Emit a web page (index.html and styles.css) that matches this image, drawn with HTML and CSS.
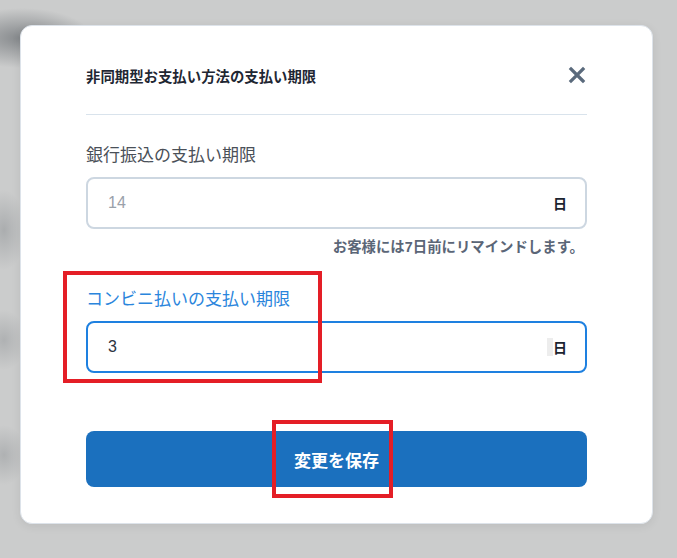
FILE: index.html
```html
<!DOCTYPE html>
<html lang="ja">
<head>
    <meta charset="UTF-8">
    <meta name="viewport" content="width=device-width, initial-scale=1.0">
    <title>支払い期限</title>
    <link rel="stylesheet" href="styles.css">
</head>
<body>
    <div class="backdrop">
        <div class="modal">
            <div class="modal-header">
                <h2 class="modal-title">非同期型お支払い方法の支払い期限</h2>
                <button class="btn-close" aria-label="閉じる">
                    <svg width="18" height="18" viewBox="0 0 18 18">
                        <path d="M3 3 L15 15 M15 3 L3 15" stroke="#5a6a7c" stroke-width="3.2" stroke-linecap="square"/>
                    </svg>
                </button>
            </div>

            <div class="field">
                <label class="field-label">銀行振込の支払い期限</label>
                <div class="input-box">
                    <span class="input-value placeholder">14</span>
                    <span class="input-unit">日</span>
                </div>
                <p class="field-hint">お客様には7日前にリマインドします。</p>
            </div>

            <div class="field field-active">
                <label class="field-label">コンビニ払いの支払い期限</label>
                <div class="input-box">
                    <span class="input-value">3</span>
                    <span class="caret-box"></span>
                    <span class="input-unit">日</span>
                </div>
            </div>

            <button class="btn-save">変更を保存</button>
        </div>
    </div>

    <!-- annotation frames -->
    <div class="mark mark-field"></div>
    <div class="mark mark-save"></div>
</body>
</html>
```

FILE: styles.css
```css
* {
    margin: 0;
    padding: 0;
    box-sizing: border-box;
}

body {
    font-family: 'Liberation Sans', 'Noto Sans CJK JP', sans-serif;
    background:
        radial-gradient(ellipse 70px 30px at 22px 38px, rgba(85, 90, 95, 0.6), transparent),
        radial-gradient(ellipse 22px 40px at 4px 230px, rgba(110, 115, 120, 0.35), transparent),
        radial-gradient(ellipse 22px 30px at 4px 340px, rgba(110, 115, 120, 0.3), transparent),
        radial-gradient(ellipse 22px 30px at 4px 455px, rgba(110, 115, 120, 0.3), transparent),
        #cbcccc;
    width: 677px;
    height: 558px;
    overflow: hidden;
    position: relative;
}

.backdrop {
    padding: 25px 24px 0 20px;
}

.modal {
    background: #fff;
    width: 633px;
    height: 499px;
    border-radius: 12px;
    border: 1px solid #dde3ea;
    box-shadow: 0 2px 10px rgba(0, 0, 0, 0.08);
    padding: 0 65px;
}

.modal-header {
    display: flex;
    justify-content: space-between;
    align-items: center;
    height: 89px;
    padding-top: 10px;
    border-bottom: 1px solid #d9e3ec;
}

.modal-title {
    font-size: 14.4px;
    font-weight: 700;
    color: #1f2733;
}

.btn-close {
    background: none;
    border: none;
    width: 18px;
    height: 18px;
    margin-right: 1px;
    cursor: pointer;
}

.field {
    padding-top: 30px;
}

.field-label {
    display: block;
    font-size: 17px;
    color: #4a5058;
    line-height: 22px;
    margin-bottom: 10px;
}

.input-box {
    display: flex;
    align-items: center;
    height: 52px;
    border: 2px solid #cdd7e1;
    border-radius: 8px;
    padding: 0 18px 0 20px;
}

.input-value {
    flex: 1;
    font-size: 16px;
    color: #2b3340;
}

.input-value.placeholder {
    color: #9aa1aa;
}

.input-unit {
    font-size: 14px;
    font-weight: 700;
    color: #1b2430;
}

.caret-box {
    width: 6px;
    height: 18px;
    background: #ededed;
}

.field-hint {
    text-align: right;
    font-size: 14.4px;
    font-weight: 700;
    color: #5b6677;
    line-height: 20px;
    margin-top: 8px;
    padding-right: 3px;
}

.field-active {
    padding-top: 32px;
}

.field-active .field-label {
    color: #2a85dc;
}

.field-active .input-box {
    border-color: #1e80e0;
}

.btn-save {
    display: block;
    width: 100%;
    height: 56px;
    margin-top: 58px;
    border: none;
    border-radius: 8px;
    background: #1b70be;
    color: #fff;
    font-family: inherit;
    font-size: 17px;
    font-weight: 700;
    cursor: pointer;
}

.mark {
    position: absolute;
    border: 4px solid #e41e26;
}

.mark-field {
    left: 63px;
    top: 271px;
    width: 259px;
    height: 112px;
}

.mark-save {
    left: 272px;
    top: 420px;
    width: 121px;
    height: 78px;
}
```
